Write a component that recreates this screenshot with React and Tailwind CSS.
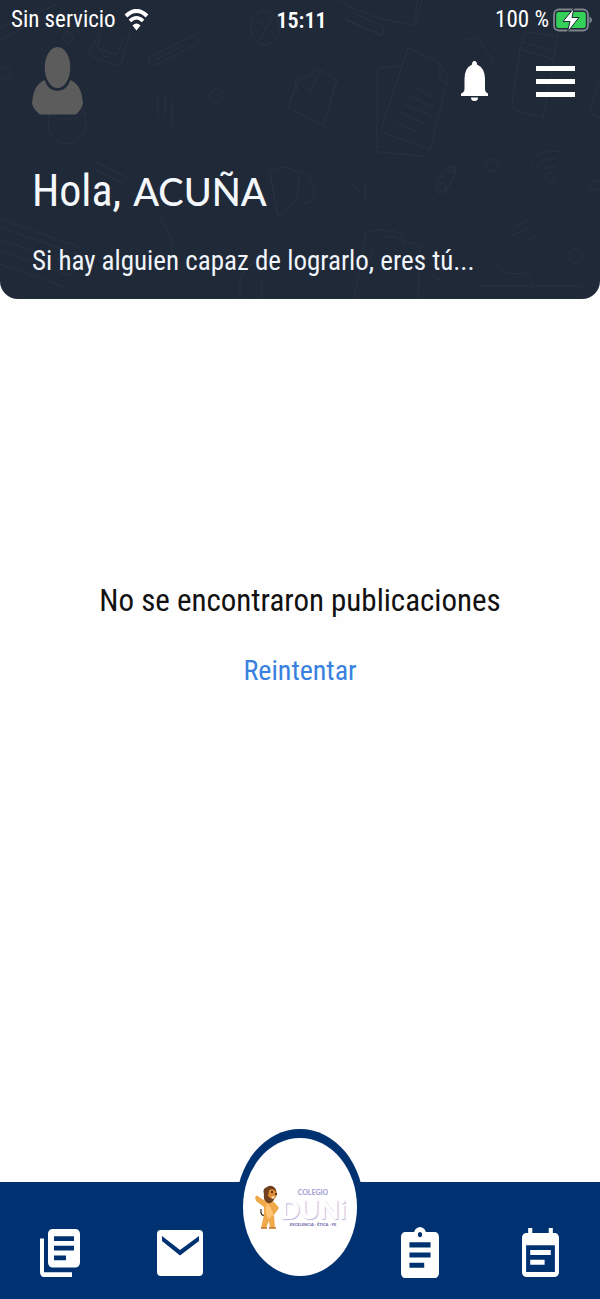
const sans = "font-['Roboto_Condensed','Liberation_Sans_Narrow','Liberation_Sans',sans-serif]";

function Doodles() {
  return (
    <svg
      className="absolute inset-0 h-full w-full"
      viewBox="0 0 600 300"
      preserveAspectRatio="none"
      fill="none"
      stroke="#28323f"
      strokeWidth="1"
      aria-hidden="true"
    >
      <path d="M0 28L58 4M0 40L30 24L62 12M100 32L90 50Q88 54 92 56L116 66Q120 67 122 62L130 32M101 34L97 48L117 55L124 36" />
      <circle cx="106" cy="54" r="3" />
      <path d="M148 58L190 37Q196 33 198 40Q199 43 195 45L158 64Q148 68 148 58M154 61L184 46" />
      <circle cx="5" cy="73" r="6" />
      <path d="M62 38l6-7 6 7-5 7zM209 96l7-9 9 8-7 10z" />
      <ellipse cx="67" cy="123" rx="19" ry="21" />
      <path d="M48 115q19 10 38-2M158 95v22M165 95v22M172 100v27" />
      <ellipse cx="265" cy="28" rx="14" ry="17" />
      <path d="M256 20l18 14M272 18l-12 22" />
      <path d="M288 108L298 80L320 70L337 80L323 126L288 108M298 80L310 93L320 72M298 93l-3-14" />
      <path d="M340 0L352 8L378 18L415 26L422 0M352 12l-7 7 37 17 2-9zM345 20l37 15M418 0l-4 22" />
      <path d="M377 150V72Q377 67 382 68L404 66M408 48L440 63L448 78L430 150L380 132zM440 63L440 80L448 84M414 87l20 12M409 96l25 12M404 104l28 13M400 113l24 11M395 122l24 11" />
      <path d="M466 40L478 38L494 62M520 50L512 105Q511 110 516 111L543 118L558 36L525 32zM522 42l35 10M522 50l33 10" />
      <path d="M600 80L590 110Q589 115 600 118" />
      <path d="M375 152L425 157L430 150M270 172Q285 162 299 174L297 200L278 217Z" />
      <path d="M270 174l5 28M300 172q12 2 14 18t-12 14M96 162l34 18M96 170l26 14" />
      <path d="M437 184Q434 190 438 194Q443 197 447 190L455 174Q457 168 452 166Q447 166 444 171z" />
      <circle cx="451" cy="170" r="3" />
      <circle cx="442" cy="188" r="4" />
      <circle cx="492" cy="166" r="6" />
      <path d="M530 165Q538 148 558 152M536 168Q543 157 556 160M541 173Q546 164 556 168" />
      <circle cx="550" cy="178" r="5" />
      <path d="M600 182Q588 180 589 187Q590 192 598 190M352 184l8 8M365 184v20M510 214l6 6M515 228l14-8M512 236l16-6" />
      <path d="M0 220L80 248M0 228L90 260M0 240L85 270M0 252L75 278M0 265L65 288M160 219q15 18 12 40M240 300V278L258 258M262 300V280" />
      <path d="M354 300L364 246L366 233L380 230L402 234L404 242L420 246L418 300M374 246L370 260M384 238q15-4 22 8M374 270h27" />
      <circle cx="575" cy="257" r="7" />
      <path d="M493 262Q502 278 523 274Q530 274 533 286M480 287H582M430 275l12 6M525 244l14-10" />
    </svg>
  );
}

function Wifi() {
  return (
    <svg className="h-[22px] w-[25px]" viewBox="0 0 25 22" aria-label="Wi-Fi" role="img">
      <path d="M2 7Q12.500-3 23 7" fill="none" stroke="#fff" strokeWidth="4" />
      <path d="M6 12Q12.500 5.500 19 12" fill="none" stroke="#fff" strokeWidth="3.600" />
      <path d="M8.500 16.500Q12.500 12.500 16.500 16.500L12.500 21.500z" fill="#fff" />
    </svg>
  );
}

function Battery() {
  return (
    <svg className="h-6 w-[39px]" viewBox="0 0 39 24" aria-label="Cargando" role="img">
      <rect x="1" y="1.500" width="34" height="21" rx="5" fill="#202938" stroke="#7f858e" strokeWidth="1.800" />
      <rect x="3.200" y="4" width="29.600" height="16" rx="2.500" fill="#35d058" />
      <path d="M36.500 8.500Q39 9.500 39 12T36.500 15.500z" fill="#7f858e" />
      <path d="M21 0L10 13.500H17L14.500 24L26 9.500H19z" fill="#fff" stroke="#202938" strokeWidth="1" strokeLinejoin="round" />
    </svg>
  );
}

function Avatar() {
  return (
    <svg className="h-[68px] w-[52px]" viewBox="0 0 52 68" fill="#5b5c5b" aria-hidden="true">
      <ellipse cx="25.500" cy="20.500" rx="12.800" ry="20.500" />
      <path d="M12.500 33Q1 38 0 57Q2 63 8 67.500H44Q49 63 51 57Q50 38 38.500 33Q34.500 44 25.500 44T12.500 33z" />
    </svg>
  );
}

function Bell() {
  return (
    <svg className="h-10 w-[27px]" viewBox="0 0 27 40" fill="#fff" aria-hidden="true">
      <path d="M13.500 0Q16 0 16 3.500Q24 7 24 18V28Q24 31 27 32.500V35H0V32.500Q3.500 31 3.500 28V18Q3.500 7 11 3.500Q11 0 13.500 0z" />
      <path d="M10 36.500H17Q17 40 13.500 40T10 36.500z" />
    </svg>
  );
}

function Lion() {
  return (
    <svg className="h-11 w-[26px]" viewBox="0 0 26 44" aria-hidden="true">
      <path d="M12 30Q6 32 7 24" fill="none" stroke="#47341f" strokeWidth="1.300" />
      <path d="M1 12Q3 9 5 12L13 17Q18 14 22 19L25 23L20 30L21 43H16L15 36L12 43H7L10 30L10 22L2 16z" fill="#f0a94a" />
      <path d="M13 18Q18 24 20 30L14 34Q10 26 13 18z" fill="#ffc574" />
      <path d="M10 9Q8 4 13 2Q17-1 21 3Q24 7 21 12Q19 19 14 18Q9 16 10 9z" fill="#70401f" />
      <path d="M15 5Q20 3 22 7Q24 11 21 13Q17 15 14 11z" fill="#dd8d34" />
      <circle cx="18" cy="7" r="1" fill="#241a16" />
      <circle cx="22" cy="9" r="1" fill="#241a16" />
      <path d="M17 12l4-1-2 3z" fill="#fff1df" />
      <path d="M7 43h6M15 43h7" stroke="#bd7428" strokeWidth="1.500" />
    </svg>
  );
}

function Logo() {
  return (
    <span className="flex items-center font-['Lato',sans-serif] font-black">
      <Lion />
      <span className="flex flex-col items-center">
        <span className="text-[7px] leading-[8px] text-[#aaa6d4]">COLEGIO</span>
        <span className="text-[26px] leading-[26px] text-white [text-shadow:1px_1px_1px_#b9b6df]">DUNi</span>
        <span className="text-[4px] leading-[5px] text-[#726dae]">EXCELENCIA - ÉTICA - FE</span>
      </span>
    </span>
  );
}

const navItems = [
  {
    label: "Publicaciones",
    box: "2 2 20 20",
    size: "h-12 w-10",
    d: "M4 6H2v14c0 1.100.9 2 2 2h14v-2H4V6zm16-4H8c-1.100 0-2 .9-2 2v12c0 1.100.9 2 2 2h12c1.100 0 2-.9 2-2V4c0-1.100-.9-2-2-2zm-1 9H9V9h10v2zm-4 4H9v-2h6v2zm4-8H9V5h10v2z",
  },
  {
    label: "Mensajes",
    box: "0 0 46 46",
    size: "h-[46px] w-[46px]",
    d: "M4 0H42Q46 0 46 4V42Q46 46 42 46H4Q0 46 0 42V4Q0 0 4 0zM5 6V11L23 25.500L42 11V6L23 20z",
  },
  null,
  {
    label: "Tareas",
    box: "3 1 18 20",
    size: "h-[51px] w-[38px]",
    d: "M19 3h-4.180C14.400 1.840 13.300 1 12 1c-1.300 0-2.400.84-2.820 2H5c-1.100 0-2 .9-2 2v14c0 1.100.9 2 2 2h14c1.100 0 2-.9 2-2V5c0-1.100-.9-2-2-2zm-7 0c.55 0 1 .45 1 1s-.45 1-1 1-1-.45-1-1 .45-1 1-1zm2 14H7v-2h7v2zm3-4H7v-2h10v2zm0-4H7V7h10v2z",
  },
  {
    label: "Calendario",
    box: "3 1 18 20",
    size: "h-[49px] w-[37px]",
    d: "M14 14H7v2h7v-2zm5 5H5V8h14v11zm0-16h-1V1h-2v2H8V1H6v2H5c-1.110 0-1.990.9-1.990 2L3 19c0 1.100.89 2 2 2h14c1.100 0 2-.9 2-2V5c0-1.100-.9-2-2-2zm-2 7H7v2h10v-2z",
  },
];

export default function App() {
  return (
    <div className={`flex min-h-screen flex-col bg-[#fefefe] ${sans}`}>
      <header className="relative overflow-hidden rounded-b-[18px] bg-[#202938] pb-5 text-white">
        <Doodles />
        <div className="relative">
          <div className="grid h-10 grid-cols-3 items-center pr-2 pl-[11px] text-[23px]">
            <div className="flex items-center gap-2">
              <span>Sin servicio</span>
              <Wifi />
            </div>
            <span className="text-center text-[22px] font-semibold">15:11</span>
            <div className="flex items-center justify-end gap-1">
              <span>100 %</span>
              <Battery />
            </div>
          </div>
          <div className="flex items-center justify-between pt-[7px] pr-[25px] pl-8">
            <button type="button" aria-label="Perfil">
              <Avatar />
            </button>
            <div className="flex items-center gap-12">
              <button type="button" aria-label="Notificaciones">
                <Bell />
              </button>
              <button type="button" aria-label="Menú" className="flex w-[39px] flex-col gap-2">
                <span className="h-[5px] bg-white" />
                <span className="h-[5px] bg-white" />
                <span className="h-[5px] bg-white" />
              </button>
            </div>
          </div>
          <h1 className="flex items-baseline gap-3 px-8 pt-12 text-[44px] leading-[56px] text-[#f4f8fc]">
            <span>Hola,</span>
            <span className="font-['Lato',sans-serif] text-[38px] font-medium">ACUÑA</span>
          </h1>
          <p className="px-8 pt-6 text-[27px] leading-9 text-[#f0f5fb]">
            Si hay alguien capaz de lograrlo, eres tú...
          </p>
        </div>
      </header>

      <main className="flex flex-1 flex-col items-center justify-center gap-8 pb-[212px] text-center">
        <p className="text-[31px] leading-10 text-[#111]">No se encontraron publicaciones</p>
        <button type="button" className="text-[28px] leading-9 text-[#3880e0]">
          Reintentar
        </button>
      </main>

      <nav className="relative grid h-[117px] grid-cols-5 bg-[#003272] pt-6" aria-label="Principal">
        {navItems.map((item) =>
          item ? (
            <a key={item.label} href="#" aria-label={item.label} className="flex items-center justify-center">
              <svg className={item.size} viewBox={item.box} preserveAspectRatio="none" fill="#fff" fillRule="evenodd" aria-hidden="true">
                <path d={item.d} />
              </svg>
            </a>
          ) : (
            <span key="home" />
          ),
        )}
        <a
          href="#"
          className="absolute -top-[53px] left-1/2 flex h-[156px] w-[128px] -translate-x-1/2 items-center justify-center rounded-[50%] bg-[#003272]"
        >
          <span className="flex h-[138px] w-[114px] items-center justify-center rounded-[50%] bg-white">
            <Logo />
          </span>
        </a>
      </nav>
    </div>
  );
}
